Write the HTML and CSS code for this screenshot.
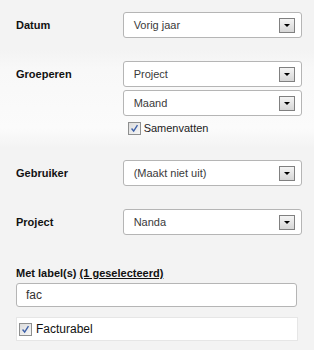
FILE: index.html
```html
<!DOCTYPE html>
<html lang="nl">
<head>
    <meta charset="UTF-8">
    <title>Filter</title>
    <link rel="stylesheet" href="styles.css">
</head>
<body>
<div class="filters">

    <div class="row">
        <div class="label">Datum</div>
        <div class="field">
            <div class="select"><span>Vorig jaar</span><i class="arrow"></i></div>
        </div>
    </div>

    <div class="row row-light">
        <div class="label">Groeperen</div>
        <div class="field">
            <div class="select"><span>Project</span><i class="arrow"></i></div>
            <div class="select"><span>Maand</span><i class="arrow"></i></div>
            <label class="check">
                <span class="box"><svg viewBox="0 0 13 13" width="13" height="13"><path d="M3 6.5 L5.5 9.5 L10 2.5" fill="none" stroke="#3b5fa8" stroke-width="1.6"/></svg></span>
                Samenvatten
            </label>
        </div>
    </div>

    <div class="row">
        <div class="label">Gebruiker</div>
        <div class="field">
            <div class="select"><span>(Maakt niet uit)</span><i class="arrow"></i></div>
        </div>
    </div>

    <div class="row">
        <div class="label">Project</div>
        <div class="field">
            <div class="select"><span>Nanda</span><i class="arrow"></i></div>
        </div>
    </div>

    <div class="labels">
        <div class="label">Met label(s) <a href="#">(1 geselecteerd)</a></div>
        <div class="text-input">fac</div>
        <div class="tag-list">
            <label class="check">
                <span class="box"><svg viewBox="0 0 13 13" width="13" height="13"><path d="M3 6.5 L5.5 9.5 L10 2.5" fill="none" stroke="#3b5fa8" stroke-width="1.6"/></svg></span>
                Facturabel
            </label>
        </div>
    </div>

</div>
</body>
</html>
```

FILE: styles.css
```css
body {
    margin: 0;
    background: #f3f3f3;
    font-family: "Liberation Sans", Arial, sans-serif;
    font-size: 11px;
    color: #222;
}
.filters {
    width: 314px;
}
.row {
    display: flex;
    padding: 12px 12px 11px 16px;
}
.row-light {
    background: linear-gradient(#f3f3f3, #f8f8f8 20%, #fbfbfb 80%, #f3f3f3);
}
.label {
    width: 107px;
    font-weight: bold;
    color: #111;
    line-height: 26px;
}
.field {
    width: 180px;
    display: flex;
    flex-direction: column;
    gap: 3px;
}
.select {
    height: 24px;
    border: 1px solid #b5b5b5;
    border-radius: 3px;
    background: #fff;
    display: flex;
    align-items: center;
    justify-content: space-between;
    padding: 0 6px 0 10px;
    color: #3a3a3a;
}
.arrow {
    width: 14px;
    height: 13px;
    border: 1px solid #808080;
    background: linear-gradient(#f4f4f4, #d6d6d6);
    position: relative;
}
.arrow::after {
    content: "";
    position: absolute;
    left: 4px;
    top: 5px;
    border-left: 3px solid transparent;
    border-right: 3px solid transparent;
    border-top: 3px solid #000;
}
.check {
    display: flex;
    align-items: center;
    gap: 3px;
    height: 18px;
    padding-left: 5px;
    color: #222;
}
.box {
    width: 11px;
    height: 11px;
    border: 1px solid #8e8f8f;
    background: linear-gradient(135deg, #dcdcdc, #f6f6f6);
    display: flex;
    align-items: center;
    justify-content: center;
}
.box svg {
    width: 11px;
    height: 11px;
}
.labels {
    padding: 20px 16px 0 16px;
}
.labels .label {
    width: auto;
    line-height: 14px;
}
.labels a {
    color: #111;
}
.text-input {
    margin-top: 3px;
    width: 270px;
    height: 22px;
    line-height: 22px;
    border: 1px solid #b5b5b5;
    border-radius: 3px;
    background: #fff;
    padding-left: 9px;
    font-size: 12px;
    color: #333;
}
.tag-list {
    margin-top: 10px;
    width: 280px;
    height: 22px;
    border: 1px solid #e6e6e6;
    background: #fff;
    display: flex;
    align-items: center;
}
.tag-list .check {
    padding-left: 2px;
    gap: 4px;
    font-size: 12px;
    color: #111;
}
```
